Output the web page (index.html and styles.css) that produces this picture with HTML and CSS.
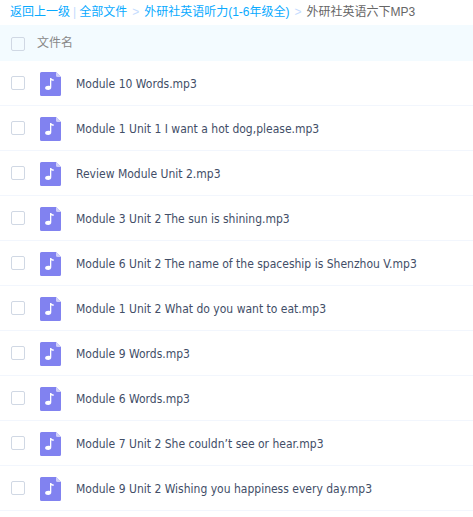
FILE: index.html
```html
<!DOCTYPE html>
<html lang="zh-CN">
<head>
<meta charset="utf-8">
<title>外研社英语六下MP3</title>
<link rel="stylesheet" href="styles.css">
</head>
<body>
<svg class="sprite" aria-hidden="true">
  <symbol id="audio" viewBox="0 0 21 24">
    <path fill="#8182f0" d="M1.500 0H16l5 5v17.500a1.500 1.500 0 0 1-1.500 1.500h-18A1.500 1.500 0 0 1 0 22.500v-21A1.500 1.500 0 0 1 1.500 0z"/>
    <path fill="#cfd0fa" d="M16 0l5 5h-3.500A1.500 1.500 0 0 1 16 3.500z"/>
    <path fill="#fff" d="M10 6h1.200c.3 1 1.200 1.200 2.600 1.500v1.300c-1.100 0-1.800-.1-2.500-.5v7c0 1.700-1.300 2.600-3.100 2.600-1.900 0-3.100-.8-3.100-2 0-1.400 1.400-2.200 3.200-2.200.6 0 1.200.1 1.700.3z"/>
  </symbol>
</svg>
<nav class="crumbs" aria-label="路径">
  <a href="#up">返回上一级</a><span class="bar">|</span><a href="#all">全部文件</a><span class="sep">&gt;</span><a href="#course">外研社英语听力(1-6年级全)</a><span class="sep">&gt;</span><span class="current">外研社英语六下MP3</span>
</nav>
<table class="files">
  <colgroup><col class="col-pick"><col class="col-kind"><col></colgroup>
  <thead>
    <tr><th class="pick"><input type="checkbox" aria-label="全选"></th><th class="title" colspan="2">文件名</th></tr>
  </thead>
  <tbody>
    <tr><td class="pick"><input type="checkbox" id="f1"></td><td class="kind"><svg class="icon"><use href="#audio"/></svg></td><td class="name"><label for="f1">Module 10 Words.mp3</label></td></tr>
    <tr><td class="pick"><input type="checkbox" id="f2"></td><td class="kind"><svg class="icon"><use href="#audio"/></svg></td><td class="name"><label for="f2">Module 1 Unit 1 I want a hot dog,please.mp3</label></td></tr>
    <tr><td class="pick"><input type="checkbox" id="f3"></td><td class="kind"><svg class="icon"><use href="#audio"/></svg></td><td class="name"><label for="f3">Review Module Unit 2.mp3</label></td></tr>
    <tr><td class="pick"><input type="checkbox" id="f4"></td><td class="kind"><svg class="icon"><use href="#audio"/></svg></td><td class="name"><label for="f4">Module 3 Unit 2 The sun is shining.mp3</label></td></tr>
    <tr><td class="pick"><input type="checkbox" id="f5"></td><td class="kind"><svg class="icon"><use href="#audio"/></svg></td><td class="name"><label for="f5">Module 6 Unit 2 The name of the spaceship is Shenzhou V.mp3</label></td></tr>
    <tr><td class="pick"><input type="checkbox" id="f6"></td><td class="kind"><svg class="icon"><use href="#audio"/></svg></td><td class="name"><label for="f6">Module 1 Unit 2 What do you want to eat.mp3</label></td></tr>
    <tr><td class="pick"><input type="checkbox" id="f7"></td><td class="kind"><svg class="icon"><use href="#audio"/></svg></td><td class="name"><label for="f7">Module 9 Words.mp3</label></td></tr>
    <tr><td class="pick"><input type="checkbox" id="f8"></td><td class="kind"><svg class="icon"><use href="#audio"/></svg></td><td class="name"><label for="f8">Module 6 Words.mp3</label></td></tr>
    <tr><td class="pick"><input type="checkbox" id="f9"></td><td class="kind"><svg class="icon"><use href="#audio"/></svg></td><td class="name"><label for="f9">Module 7 Unit 2 She couldn’t see or hear.mp3</label></td></tr>
    <tr><td class="pick"><input type="checkbox" id="f10"></td><td class="kind"><svg class="icon"><use href="#audio"/></svg></td><td class="name"><label for="f10">Module 9 Unit 2 Wishing you happiness every day.mp3</label></td></tr>
  </tbody>
</table>
</body>
</html>
```
FILE: styles.css
```css
body {
  margin: 0;
  background: #fff;
  color: #424e67;
  font: 12px/16px "DejaVu Sans Condensed", "Noto Sans CJK SC", sans-serif;
}

.sprite {
  display: none;
}

.crumbs {
  display: flex;
  align-items: center;
  padding: 4px 10px 5px;
  color: #666;
  font-family: "Liberation Sans", "Noto Sans CJK SC", sans-serif;
  white-space: nowrap;
}

.crumbs a {
  color: #09aaff;
  text-decoration: none;
}

.bar {
  margin: 0 3px;
  color: #c4dbfe;
}

.sep {
  margin: 0 5px;
  color: #c4dbfe;
}

.files {
  width: 100%;
  border-collapse: separate;
  border-spacing: 0;
  table-layout: fixed;
}

.col-pick {
  width: 37px;
}

.col-kind {
  width: 39px;
}

th,
td {
  box-sizing: border-box;
  padding: 0;
  text-align: left;
  vertical-align: middle;
}

th {
  height: 36px;
  background: #f3fbff;
}

td {
  height: 45px;
  border-bottom: 1px solid #f2f6fd;
}

.pick input {
  display: block;
  width: 14px;
  height: 14px;
  margin: 0 0 0 11px;
  box-sizing: border-box;
  appearance: none;
  border: 1px solid #d0d8e4;
  border-radius: 2px;
  background: transparent;
}

.pick input:checked {
  background: #09aaff;
}

th.pick {
  padding-top: 2px;
}

.title {
  color: #888;
  font-weight: 400;
}

.kind,
.name {
  padding-top: 2px;
}

.icon {
  display: block;
  width: 21px;
  height: 24px;
  margin-left: 3px;
}

.name {
  white-space: nowrap;
}
```
